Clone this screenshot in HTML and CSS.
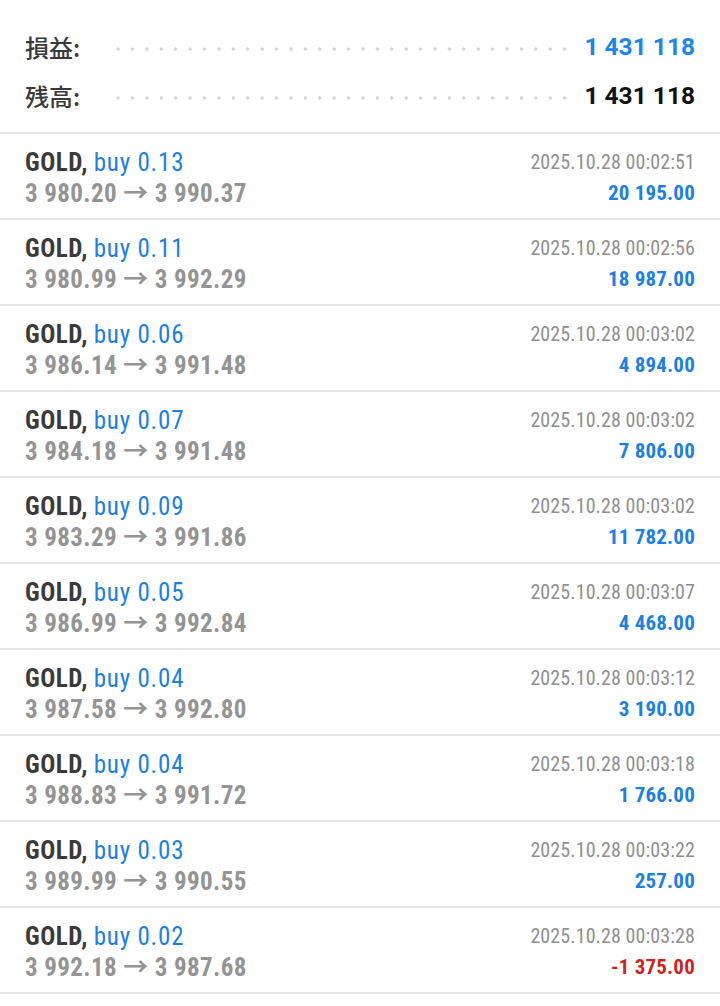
FILE: index.html
```html
<!DOCTYPE html>
<html lang="ja">
<head>
<meta charset="utf-8">
<link rel="stylesheet" href="styles.css">
</head>
<body>
<div class="summary">
  <div class="sum-row"><span class="sum-label">損益:</span><span class="dots"></span><span class="sum-value blue">1 431 118</span></div>
  <div class="sum-row"><span class="sum-label">残高:</span><span class="dots"></span><span class="sum-value">1 431 118</span></div>
</div>
<div class="deals">
  <div class="deal"><div class="left"><div class="l1"><b>GOLD,</b> <span class="blue">buy 0.13</span></div><div class="l2">3 980.20 → 3 990.37</div></div><div class="right"><div class="date">2025.10.28 00:02:51</div><div class="profit">20 195.00</div></div></div>
  <div class="deal"><div class="left"><div class="l1"><b>GOLD,</b> <span class="blue">buy 0.11</span></div><div class="l2">3 980.99 → 3 992.29</div></div><div class="right"><div class="date">2025.10.28 00:02:56</div><div class="profit">18 987.00</div></div></div>
  <div class="deal"><div class="left"><div class="l1"><b>GOLD,</b> <span class="blue">buy 0.06</span></div><div class="l2">3 986.14 → 3 991.48</div></div><div class="right"><div class="date">2025.10.28 00:03:02</div><div class="profit">4 894.00</div></div></div>
  <div class="deal"><div class="left"><div class="l1"><b>GOLD,</b> <span class="blue">buy 0.07</span></div><div class="l2">3 984.18 → 3 991.48</div></div><div class="right"><div class="date">2025.10.28 00:03:02</div><div class="profit">7 806.00</div></div></div>
  <div class="deal"><div class="left"><div class="l1"><b>GOLD,</b> <span class="blue">buy 0.09</span></div><div class="l2">3 983.29 → 3 991.86</div></div><div class="right"><div class="date">2025.10.28 00:03:02</div><div class="profit">11 782.00</div></div></div>
  <div class="deal"><div class="left"><div class="l1"><b>GOLD,</b> <span class="blue">buy 0.05</span></div><div class="l2">3 986.99 → 3 992.84</div></div><div class="right"><div class="date">2025.10.28 00:03:07</div><div class="profit">4 468.00</div></div></div>
  <div class="deal"><div class="left"><div class="l1"><b>GOLD,</b> <span class="blue">buy 0.04</span></div><div class="l2">3 987.58 → 3 992.80</div></div><div class="right"><div class="date">2025.10.28 00:03:12</div><div class="profit">3 190.00</div></div></div>
  <div class="deal"><div class="left"><div class="l1"><b>GOLD,</b> <span class="blue">buy 0.04</span></div><div class="l2">3 988.83 → 3 991.72</div></div><div class="right"><div class="date">2025.10.28 00:03:18</div><div class="profit">1 766.00</div></div></div>
  <div class="deal"><div class="left"><div class="l1"><b>GOLD,</b> <span class="blue">buy 0.03</span></div><div class="l2">3 989.99 → 3 990.55</div></div><div class="right"><div class="date">2025.10.28 00:03:22</div><div class="profit">257.00</div></div></div>
  <div class="deal"><div class="left"><div class="l1"><b>GOLD,</b> <span class="blue">buy 0.02</span></div><div class="l2">3 992.18 → 3 987.68</div></div><div class="right"><div class="date">2025.10.28 00:03:28</div><div class="profit loss">-1 375.00</div></div></div>
</div>
</body>
</html>
```
FILE: styles.css
```css
html, body {
  margin: 0;
  padding: 0;
  background: #ffffff;
}
body {
  font-family: "Roboto Condensed", "Roboto", "Noto Sans CJK JP", sans-serif;
  color: #333333;
}
.summary {
  padding: 22px 25px 12px 25px;
  border-bottom: 2px solid #e6e6e6;
}
.sum-row {
  display: flex;
  align-items: center;
  height: 49px;
}
.sum-label {
  font-family: "Noto Sans CJK JP", sans-serif;
  font-weight: 500;
  font-size: 24px;
  color: #3a3a3a;
  width: 86px;
  flex: none;
}
.dots {
  flex: 1;
  height: 4px;
  margin: 4px 12px 0 0;
  background-image: radial-gradient(circle, #d2d2d2 1.4px, transparent 1.9px);
  background-size: 14px 4px;
  background-repeat: space no-repeat;
}
.sum-value {
  font-family: "Roboto", sans-serif;
  font-weight: 700;
  font-size: 24.5px;
  color: #111111;
}
.blue {
  color: #1a7fe6;
}
.sum-value.blue {
  color: #1b86f0;
}
.deal {
  display: flex;
  justify-content: space-between;
  padding: 13px 25px 9px 25px;
  border-bottom: 2px solid #e6e6e6;
  height: 62px;
}
.l1, .l2 {
  font-size: 25px;
  line-height: 31px;
  white-space: nowrap;
}
.l1 b {
  font-weight: 700;
  letter-spacing: 0.5px;
  color: #3a3a3a;
}
.l1 .blue {
  letter-spacing: 0.8px;
}
.l2 {
  font-weight: 700;
  letter-spacing: 0.4px;
  color: #949494;
}
.right {
  text-align: right;
}
.date {
  font-size: 20px;
  line-height: 31px;
  letter-spacing: 0.1px;
  color: #8f8f8f;
}
.profit {
  font-size: 21px;
  line-height: 31px;
  font-weight: 700;
  letter-spacing: 0.2px;
  color: #1a7fe6;
}
.profit.loss {
  color: #d21f1f;
}
```
